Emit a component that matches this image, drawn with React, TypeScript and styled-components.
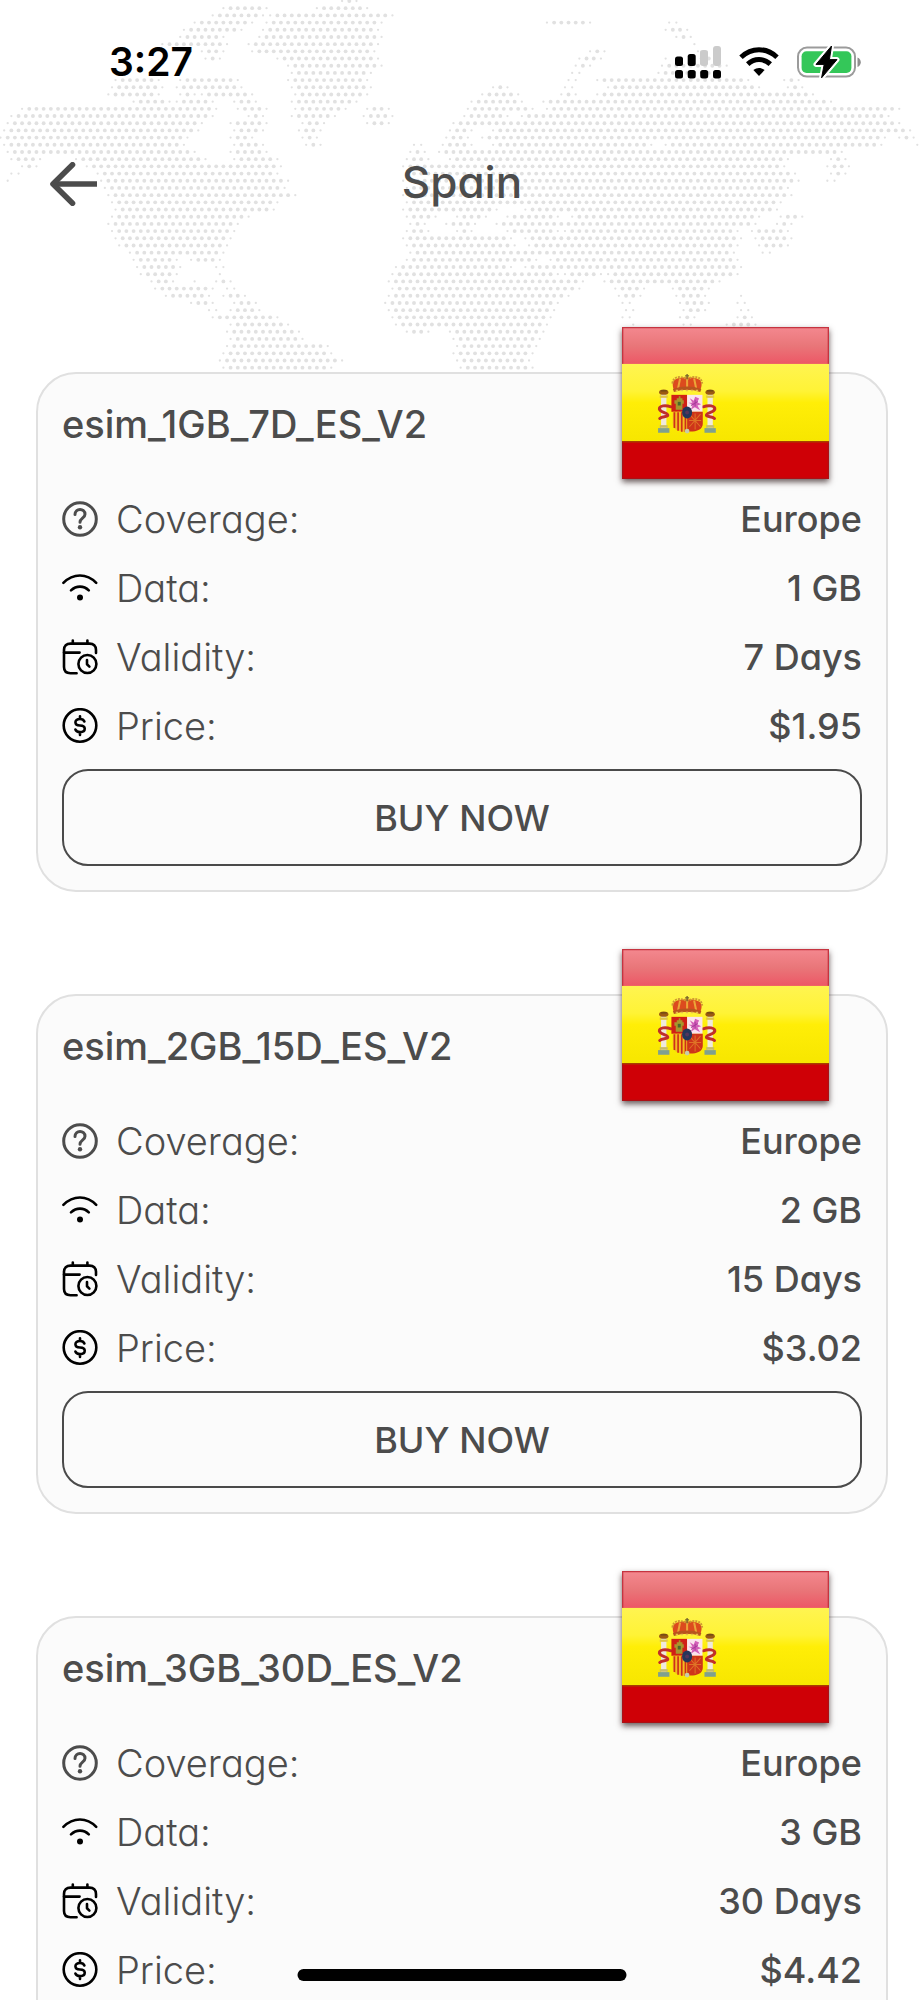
import React from "react";
import styled, { createGlobalStyle } from "styled-components";

const GlobalStyle = createGlobalStyle`
  *, *::before, *::after { box-sizing: border-box; }
  body {
    margin: 0;
    background: #ffffff;
    color: #4c4c4c;
    font-family: Inter, "Liberation Sans", sans-serif;
    font-feature-settings: "cv11" 1, "ss03" 1;
  }
`;

const Screen = styled.main`
  position: relative;
  height: 100vh;
  display: flex;
  flex-direction: column;
`;

const MapBackdrop = styled.svg`
  position: absolute;
  inset: 0 0 auto 0;
  width: 100%;
  fill: #e1e1e1;
`;

const StatusBar = styled.div`
  position: relative;
  flex: none;
  display: flex;
  justify-content: space-between;
  align-items: center;
  height: 124px;
  padding: 0 63px 0 109px;
`;

const Clock = styled.time`
  font-size: 39px;
  line-height: 48px;
  font-weight: 600;
  color: #000000;
`;

const StatusIcons = styled.div`
  display: flex;
  align-items: center;
  gap: 18px;
`;

const TopBar = styled.header`
  position: relative;
  flex: none;
  display: grid;
  grid-template-columns: 48px 1fr 48px;
  align-items: center;
  height: 120px;
  padding: 0 50px;
`;

const BackButton = styled.button`
  display: flex;
  padding: 0;
  border: 0;
  background: none;
  cursor: pointer;
`;

const PageTitle = styled.h1`
  margin: 0;
  padding-bottom: 4px;
  text-align: center;
  font-size: 44px;
  line-height: 56px;
  font-weight: 500;
`;

const PlanList = styled.ul`
  position: relative;
  flex: 1;
  min-height: 0;
  overflow-y: auto;
  scrollbar-width: none;
  display: flex;
  flex-direction: column;
  gap: 102px;
  margin: 0;
  padding: 128px 36px 80px;
  list-style: none;
`;

const Card = styled.li`
  position: relative;
  flex: none;
  padding: 16px 24px 24px;
  border: 2px solid #e0e0e0;
  border-radius: 40px;
  background: #fbfbfb;
`;

const CardTitle = styled.h2`
  margin: 0 0 26px;
  font-size: 38px;
  line-height: 68px;
  font-weight: 500;
`;

const FlagImage = styled.svg`
  position: absolute;
  top: -47px;
  right: 57px;
  width: 207px;
  height: 152px;
  box-shadow: 0 3px 6px rgba(40, 20, 20, 0.7);
`;

const Details = styled.dl`
  margin: 0 0 9px;
`;

const DetailRow = styled.div`
  display: flex;
  align-items: center;
  height: 69px;
  font-size: 36px;
  line-height: 48px;
`;

const DetailLabel = styled.dt`
  display: flex;
  align-items: center;
  gap: 18px;
  font-size: 38px;
  font-weight: 300;
`;

const DetailValue = styled.dd`
  margin: 0 0 0 auto;
  font-weight: 500;
`;

const BuyButton = styled.button`
  display: block;
  width: 100%;
  height: 97px;
  padding: 0;
  border: 2px solid #4a4a4a;
  border-radius: 26px;
  background: none;
  color: inherit;
  font: inherit;
  font-size: 36px;
  font-weight: 500;
  cursor: pointer;
`;

const HomeIndicator = styled.div`
  position: absolute;
  left: 50%;
  bottom: 19px;
  width: 329px;
  height: 12px;
  border-radius: 6px;
  background: #000000;
  transform: translateX(-50%);
`;

/* Land spans for every dotted line of the map, as start/end pairs. */
const landRows: number[][] = [
  [1005, 1090],
  [650, 800, 930, 1110],
  [620, 790, 800, 1180],
  [580, 760, 790, 1150, 1636, 1791, 1986, 2036],
  [550, 730, 780, 1140, 1996, 2066],
  [520, 690, 760, 1150, 2016, 2090],
  [480, 700, 740, 1140, 2066, 2100],
  [590, 680, 750, 1130, 1766, 1816, 2076, 2130],
  [610, 670, 830, 1140, 1736, 1806, 1976, 2010, 2076, 2150],
  [850, 1145, 1726, 1776, 1966, 2190],
  [860, 1130, 1696, 1746, 1956, 2160],
  [340, 490, 530, 720, 850, 1115, 1696, 1736, 1786, 2250, 2346, 2396],
  [320, 500, 530, 730, 865, 1115, 1466, 1536, 1690, 1720, 1810, 2290, 2346, 2410],
  [320, 490, 530, 590, 600, 770, 880, 1110, 1426, 1560, 1666, 1740, 1776, 2460],
  [390, 510, 530, 650, 700, 780, 870, 1090, 1406, 1580, 1626, 2500],
  [50, 660, 710, 800, 880, 1040, 1100, 1180, 1386, 1600, 1626, 2700],
  [30, 655, 730, 810, 870, 1010, 1085, 1180, 1386, 1536, 1560, 2680],
  [20, 615, 690, 800, 890, 980, 1100, 1180, 1360, 2700],
  [0, 605, 700, 790, 890, 970, 1340, 1436, 1460, 2740],
  [0, 575, 690, 760, 900, 960, 1330, 1416, 1440, 2670, 2690, 2760],
  [10, 560, 690, 790, 915, 965, 1235, 1265, 1320, 1420, 1460, 1960, 1985, 2660, 2750, 2772],
  [20, 600, 680, 810, 1225, 1275, 1310, 2540],
  [30, 130, 220, 620, 690, 840, 1205, 1300, 1330, 2370, 2490, 2540],
  [55, 115, 250, 850, 1195, 2360, 2480, 2550],
  [25, 75, 285, 850, 1205, 2390, 2490, 2540],
  [15, 30, 295, 870, 1195, 2400, 2480, 2520],
  [310, 875, 1205, 2380],
  [325, 890, 1195, 2380],
  [335, 840, 1205, 2350],
  [335, 825, 1200, 1510, 1560, 2340],
  [325, 755, 1210, 1310, 1360, 1470, 1510, 1680, 1700, 2280, 2340, 2410],
  [315, 720, 1215, 1285, 1330, 1440, 1480, 2270, 2320, 2380],
  [330, 710, 1210, 1290, 1350, 1420, 1510, 1680, 1690, 2220, 2250, 2370],
  [340, 700, 1205, 1550, 1570, 2230, 2250, 2380],
  [350, 695, 1205, 1560, 1570, 2220, 2260, 2380],
  [375, 675, 1220, 2220, 2270, 2310],
  [390, 550, 570, 675, 1210, 1630, 1650, 2220],
  [400, 550, 640, 675, 1175, 1540, 1570, 2230],
  [415, 545, 640, 670, 1165, 1680, 1690, 1810, 1815, 2220],
  [450, 540, 580, 600, 640, 695, 1145, 1756, 1810, 2170],
  [465, 650, 670, 705, 1160, 1740, 1840, 1940, 2000, 2130],
  [490, 640, 670, 740, 1155, 1720, 1850, 1930, 2020, 2130, 2210, 2230],
  [565, 650, 695, 775, 1145, 1690, 1855, 1910, 2030, 2130, 2205, 2250],
  [615, 665, 690, 785, 1160, 1680, 1860, 1900, 2040, 2130, 2210, 2260],
  [630, 845, 1165, 1670, 1860, 1890, 2030, 2090, 2210, 2260],
  [675, 875, 1185, 1660, 1880, 1920, 2040, 2090, 2170, 2270],
  [675, 905, 1215, 1300, 1345, 1650],
  [680, 915, 1355, 1630],
  [665, 990, 1350, 1620],
  [660, 1015, 1360, 1600],
  [655, 1030, 1370, 1600],
  [670, 1015, 1370, 1600],
];

const STEP = 21.57;

function WorldMap() {
  const dots: React.ReactElement[] = [];
  landRows.forEach((spans, row) => {
    const shift = row % 2 ? 0.07 : 0.58;
    for (let i = 0; i < spans.length; i += 2) {
      const first = Math.ceil(spans[i] / STEP - shift);
      const last = Math.floor(spans[i + 1] / STEP - shift);
      for (let c = first; c <= last; c++) {
        const edge = c === first || c === last;
        dots.push(
          <circle key={`${row}-${c}`} cx={(c + shift) * STEP} cy={3 + row * STEP} r={edge ? 3.4 : 5.8} />
        );
      }
    }
  });
  return (
    <MapBackdrop viewBox="0 0 2772 1140" aria-hidden="true">
      {dots}
    </MapBackdrop>
  );
}

function SignalIcon() {
  return (
    <svg width="46" height="33" viewBox="0 0 46 33" aria-hidden="true">
      <g fill="#cbcbcb">
        <rect x="25" y="0" width="8" height="20" rx="3" transform="translate(0 4) scale(1 .8)" />
        <rect x="38" y="0" width="8" height="20" rx="3" />
      </g>
      <rect x="0" y="10.5" width="8" height="9.5" rx="2.5" />
      <rect x="12.7" y="8" width="8" height="12" rx="2.5" />
      {[0, 12.7, 25.2, 38].map((x) => (
        <rect key={x} x={x} y="24" width="8" height="8.5" rx="2.5" />
      ))}
    </svg>
  );
}

function StatusWifiIcon() {
  return (
    <svg width="40" height="30" viewBox="0 0 40 30" aria-hidden="true">
      <g fill="none" stroke="#000" strokeWidth="5">
        <path d="M2 10.2C12.5 .2 27.5 .2 38 10.2" />
        <path d="M8.7 17.2C15.4 11 24.6 11 31.3 17.2" />
      </g>
      <path d="M14.4 23.1C17.8 20.2 22.2 20.2 25.6 23.1L20 29Z" />
    </svg>
  );
}

function BatteryIcon() {
  const bolt = "M34.5 0L19 18.4H27.2L24.6 31.8L40 13.6H32.4Z";
  return (
    <svg width="64" height="32" viewBox="0 0 64 32" aria-hidden="true">
      <rect x="1" y="1.6" width="57" height="29" rx="9" fill="#fff" stroke="#9b9b9b" strokeWidth="2" />
      <rect x="4.6" y="5.2" width="49.8" height="21.8" rx="5" fill="#34c759" />
      <path d="M60.5 11.5c4.4 1.5 4.4 8 0 9.5z" fill="#8e8e8e" />
      <path d={bolt} fill="#fff" stroke="#fff" strokeWidth="5" strokeLinejoin="round" />
      <path d={bolt} stroke="#000" strokeWidth="1" strokeLinejoin="round" />
    </svg>
  );
}

function BackArrow() {
  return (
    <svg width="48" height="44" viewBox="0 0 48 44" fill="none" stroke="#4c4c4c" strokeWidth="5.6" aria-hidden="true">
      <path d="M47 22H3" />
      <path d="M22.5 2.8L3 22L22.5 41.2" strokeLinecap="round" strokeLinejoin="round" />
    </svg>
  );
}

const RowIcon = styled.svg`
  display: block;
  width: 36px;
  height: 36px;
  fill: none;
  stroke: #000000;
  stroke-width: 2.6;
  stroke-linecap: round;
  stroke-linejoin: round;
`;

function HelpIcon() {
  return (
    <RowIcon viewBox="0 0 36 36" aria-hidden="true">
      <g stroke="#4c4c4c" strokeWidth="3">
        <circle cx="18" cy="18" r="16.3" />
        <path d="M13 13.6C13 6.8 23 6.8 23 13.2C23 17.2 18 17.2 18 21.3" />
        <circle cx="18" cy="26.3" r="2.2" fill="#4c4c4c" stroke="none" />
      </g>
    </RowIcon>
  );
}

function DataIcon() {
  return (
    <RowIcon viewBox="0 0 36 36" aria-hidden="true">
      <path d="M1.4 12.8C11.2 3 24.8 3 34.2 12.8" />
      <path d="M9 20.4C14.3 15.4 21.7 15.4 26.8 20.4" />
      <circle cx="18" cy="27.6" r="3" fill="#000" stroke="none" />
    </RowIcon>
  );
}

function ValidityIcon() {
  return (
    <RowIcon viewBox="0 0 36 36" aria-hidden="true">
      <path d="M34 14V11C34 7 31.5 4.6 27.5 4.6H8.5C4.5 4.6 2 7 2 11V28C2 32 4.5 34.2 8.5 34.2H14.6" />
      <path d="M2 13.6H17.6M10.8 1.6V4.4M25.4 1.6V4.4" />
      <circle cx="25.4" cy="25" r="9" />
      <path d="M25 21V25.3L27.4 27.6" />
    </RowIcon>
  );
}

function PriceIcon() {
  return (
    <RowIcon viewBox="0 0 36 36" aria-hidden="true">
      <circle cx="18" cy="17.5" r="16.3" />
      <path d="M22.4 13.5C21.8 11.9 20.2 11 18 11C11.8 11 12 17.5 18 17.5C24.3 17.5 24.3 24.1 18 24.1C15.6 24.1 14 23.1 13.4 21.5M18 8.3V10.5M18 24.5V26.9" />
    </RowIcon>
  );
}

function Pillar({ x }: { x: number }) {
  return (
    <g>
      <rect x={x - 8} y="250" width="16" height="105" fill="#efe9dc" />
      <ellipse cx={x} cy="246" rx="14" ry="8" fill="#9b5a10" />
      <path d={`M${x - 9} 242h18`} stroke="#6f4a16" strokeWidth="4" />
      <rect x={x - 12} y="256" width="24" height="7" fill="#dfc547" />
      <rect x={x - 17} y="354" width="34" height="14" fill="#7fa08f" />
      <rect x={x - 12} y="345" width="24" height="8" fill="#c7bc68" />
    </g>
  );
}

function SpainFlag({ id }: { id: string }) {
  return (
    <FlagImage viewBox="65 50 620 457" preserveAspectRatio="none" role="img" aria-label="Flag of Spain">
      <defs>
        <linearGradient id={`${id}-top`} x1="0" y1="0" x2="0" y2="1">
          <stop offset="0" stopColor="#f4888f" />
          <stop offset="0.5" stopColor="#e97679" />
          <stop offset="1" stopColor="#ed5665" />
        </linearGradient>
        <linearGradient id={`${id}-mid`} x1="0" y1="0" x2="0" y2="1">
          <stop offset="0" stopColor="#fff451" />
          <stop offset="0.35" stopColor="#fff336" />
          <stop offset="0.5" stopColor="#ffee07" />
          <stop offset="1" stopColor="#f7e600" />
        </linearGradient>
      </defs>
      <rect x="65" y="50" width="620" height="113" fill={`url(#${id}-top)`} />
      <path d="M67 163V52H683V163" fill="none" stroke="#c53440" strokeWidth="4" />
      <rect x="65" y="161" width="620" height="233" fill={`url(#${id}-mid)`} />
      <rect x="65" y="393" width="620" height="114" fill="#cf0006" />
      <path d="M65 395H685" stroke="#a93d00" strokeWidth="4" />
      <path d="M67 397V505H683V397" fill="none" stroke="#ac1015" strokeWidth="4" />

      <Pillar x={190} />
      <Pillar x={329} />
      <g fill="none" stroke="#c02f2a" strokeWidth="9" strokeLinecap="round">
        <path d="M212 290C195 284 176 286 177 297C180 308 205 307 202 316C198 321 185 318 178 325" />
        <path d="M308 290C325 284 344 286 343 297C340 308 315 307 318 316C322 321 335 318 342 325" />
      </g>

      <path d="M220 239C210 208 225 202 260 202C295 202 311 208 300 239Z" fill="#dc4b1e" />
      <path d="M216 220C218 198 240 196 260 207C280 196 303 198 305 220" fill="none" stroke="#cf9832" strokeWidth="6" strokeDasharray="6 3" />
      <path d="M239 205L233 234M260 204V236M281 205L287 234" stroke="#eba638" strokeWidth="6" />
      <path d="M219 241C245 232 275 232 301 241" fill="none" stroke="#b8541e" strokeWidth="10" />
      <path d="M226 241H295" stroke="#e9be4a" strokeWidth="4" strokeDasharray="7 8" />
      <path d="M260 191V207M254 197H266" stroke="#75612b" strokeWidth="4" />

      <path d="M213 254H260V305H213Z" fill="#d02016" />
      <path d="M260 254H306V305H260Z" fill="#fbe3ee" />
      <path d="M217 305H260V366C235 364 217 360 217 340Z" fill="#f3bc20" />
      <path d="M222 306V354M233 306V362M244 306V365M255 306V366" stroke="#cf3019" strokeWidth="5" />
      <path d="M260 305H307V340C307 360 285 366 260 364Z" fill="#ce351a" />
      <path d="M267 312L300 350M300 312L267 350M284 310V358M266 331H302" stroke="#df7326" strokeWidth="3" />
      <path d="M226 299V281H222V270H229V264H235V258H240V264H246V270H250V281H246V299Z" fill="#a8962c" />
      <path d="M232 275H241V286H232Z" fill="#48692b" />
      <path d="M268 264L280 272L284 260L296 265L290 276L302 282L291 286L299 300L283 291L272 298L277 284L264 278L276 278Z" fill="#d45fb9" />
      <path d="M284 269V289M272 286L292 274" stroke="#a93b9c" strokeWidth="3" />
      <ellipse cx="260" cy="307" rx="15" ry="18" fill="#24365b" />
      <circle cx="260" cy="307" r="6" fill="#54355b" />
      <circle cx="260" cy="363" r="7" fill="#c5cdaa" />
    </FlagImage>
  );
}

interface Plan {
  name: string;
  coverage: string;
  data: string;
  validity: string;
  price: string;
}

const plans: Plan[] = [
  { name: "esim_1GB_7D_ES_V2", coverage: "Europe", data: "1 GB", validity: "7 Days", price: "$1.95" },
  { name: "esim_2GB_15D_ES_V2", coverage: "Europe", data: "2 GB", validity: "15 Days", price: "$3.02" },
  { name: "esim_3GB_30D_ES_V2", coverage: "Europe", data: "3 GB", validity: "30 Days", price: "$4.42" },
];

function Detail({ icon, label, value }: { icon: React.ReactNode; label: string; value: string }) {
  return (
    <DetailRow>
      <DetailLabel>
        {icon}
        {label}
      </DetailLabel>
      <DetailValue>{value}</DetailValue>
    </DetailRow>
  );
}

function PlanCard({ plan }: { plan: Plan }) {
  return (
    <Card>
      <CardTitle>{plan.name}</CardTitle>
      <SpainFlag id={plan.name} />
      <Details>
        <Detail icon={<HelpIcon />} label="Coverage:" value={plan.coverage} />
        <Detail icon={<DataIcon />} label="Data:" value={plan.data} />
        <Detail icon={<ValidityIcon />} label="Validity:" value={plan.validity} />
        <Detail icon={<PriceIcon />} label="Price:" value={plan.price} />
      </Details>
      <BuyButton type="button">BUY NOW</BuyButton>
    </Card>
  );
}

export default function App() {
  return (
    <>
      <GlobalStyle />
      <Screen>
        <WorldMap />
        <StatusBar>
          <Clock>3:27</Clock>
          <StatusIcons>
            <SignalIcon />
            <StatusWifiIcon />
            <BatteryIcon />
          </StatusIcons>
        </StatusBar>
        <TopBar>
          <BackButton type="button" aria-label="Back">
            <BackArrow />
          </BackButton>
          <PageTitle>Spain</PageTitle>
        </TopBar>
        <PlanList>
          {plans.map((plan) => (
            <PlanCard key={plan.name} plan={plan} />
          ))}
        </PlanList>
        <HomeIndicator />
      </Screen>
    </>
  );
}
